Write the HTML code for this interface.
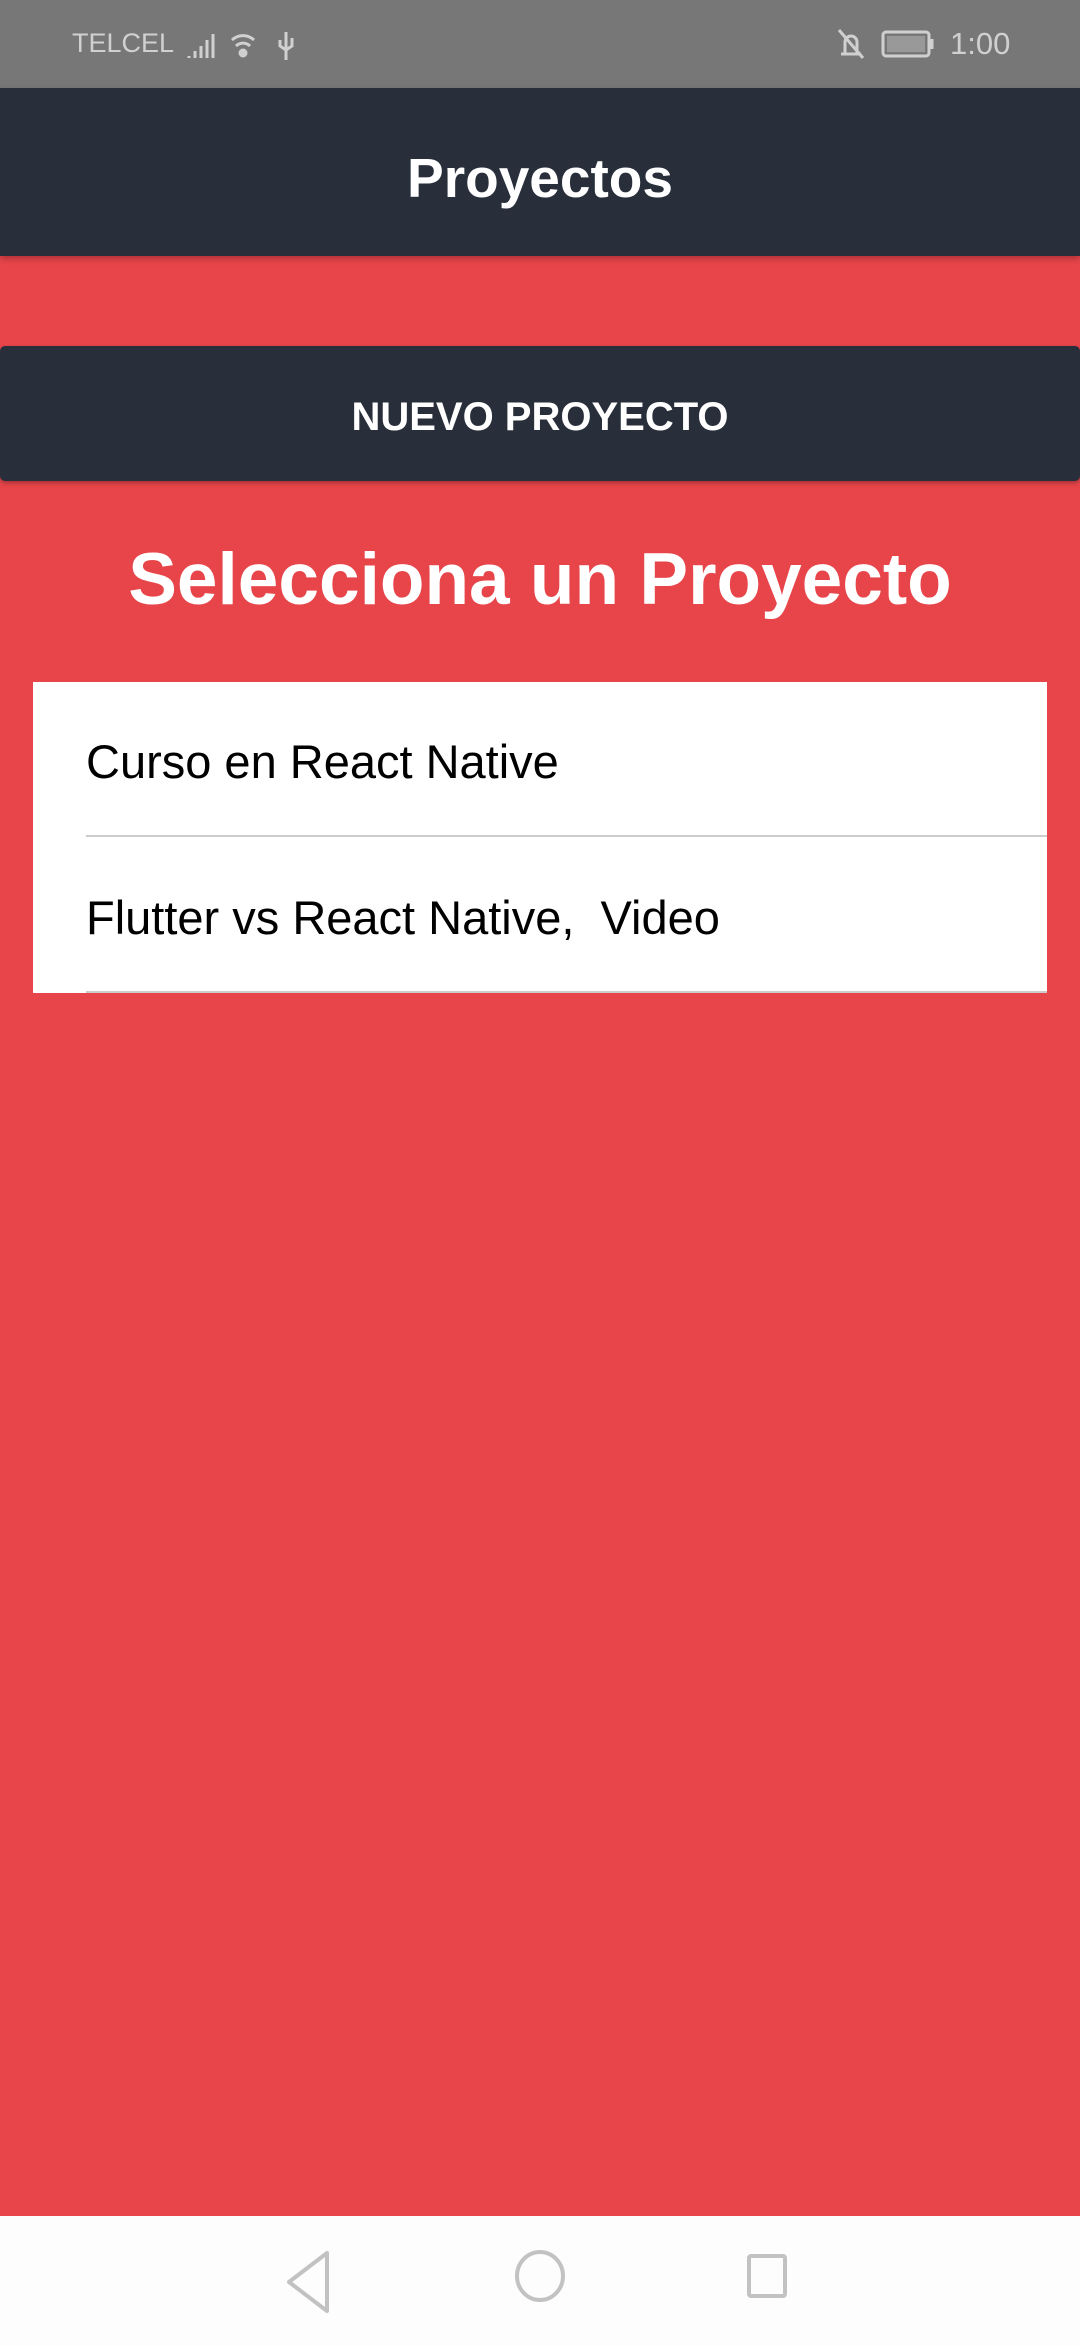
<!DOCTYPE html>
<html><head><meta charset="utf-8"><style>
*{margin:0;padding:0;box-sizing:border-box}
html{background:#fdfdfd}
html,body{width:1080px;height:2340px}
body{background:#e8454a;font-family:"Liberation Sans",Roboto,sans-serif;position:relative;overflow:hidden}
.sb{position:absolute;left:0;top:0;width:1080px;height:88px;background:#777}
.sb span{position:absolute;color:#d0d0d0;font-size:27px;top:28px}
.hd{position:absolute;left:0;top:88px;width:1080px;height:168px;background:#282e3a;box-shadow:0 3px 6px rgba(0,0,0,.25);color:#fff;font-weight:bold;font-size:55px;text-align:center;line-height:180px}
.bt{position:absolute;left:0;top:346px;width:1080px;height:135px;background:#282e3a;border-radius:5px;box-shadow:0 2px 5px rgba(0,0,0,.3);color:#fff;font-weight:bold;font-size:40px;text-align:center;line-height:143px}
.tt{position:absolute;left:0;top:538px;width:1080px;text-align:center;color:#fff;font-weight:bold;font-size:73px}
.ls{position:absolute;left:33px;top:682px;width:1014px;height:311px;background:#fff}
.it{position:absolute;left:53px;right:0;height:155px;line-height:160px;font-size:47px;color:#000}
.nv{position:absolute;left:0;top:2216px;width:1080px;height:130px;background:#fdfdfd}
</style></head><body>
<div class="sb">
<span style="left:72px">TELCEL</span>
<svg style="position:absolute;left:186px;top:28px" width="120" height="34" viewBox="0 0 120 34" fill="none" stroke="#d0d0d0" stroke-width="3">
<path d="M3 30v-2M9 30v-7M15 30v-12M21 30v-18M27 30v-24"/>
<path d="M46 12a16 16 0 0 1 22 0M50 18a10 10 0 0 1 14 0"/><circle cx="57" cy="25" r="3" fill="#d0d0d0"/>
<path d="M100 4v28M94 12v6l6 4M106 10v8l-6 4"/>
</svg>
<svg style="position:absolute;left:835px;top:24px" width="110" height="40" viewBox="0 0 110 40" fill="none" stroke="#d0d0d0" stroke-width="3">
<path d="M6 30h20M10 30v-12a6 6 0 0 1 12 0v12M4 6l24 28"/>
<rect x="48" y="8" width="46" height="24" rx="3"/><rect x="52" y="12" width="38" height="16" fill="#999" stroke="none"/><path d="M97 15v10"/>
</svg>
<span style="left:950px;font-size:31px;top:26px">1:00</span>
</div>
<div class="hd">Proyectos</div>
<div class="bt">NUEVO PROYECTO</div>
<div class="tt">Selecciona un Proyecto</div>
<div class="ls">
<div class="it" style="top:0;border-bottom:2px solid #ccc">Curso en React Native</div>
<div class="it" style="top:156px;border-bottom:2px solid #ccc">Flutter vs React Native,&nbsp; Video</div>
</div>
<div class="nv">
<svg width="1080" height="124" viewBox="0 0 1080 124" fill="none" stroke="#c2c2c2" stroke-width="4" stroke-linejoin="round">
<path d="M327 37L289 66L327 95Z"/>
<ellipse cx="540" cy="60" rx="23" ry="24"/>
<rect x="749" y="40" width="36" height="40" rx="2"/>
</svg>
</div>
</body></html>
